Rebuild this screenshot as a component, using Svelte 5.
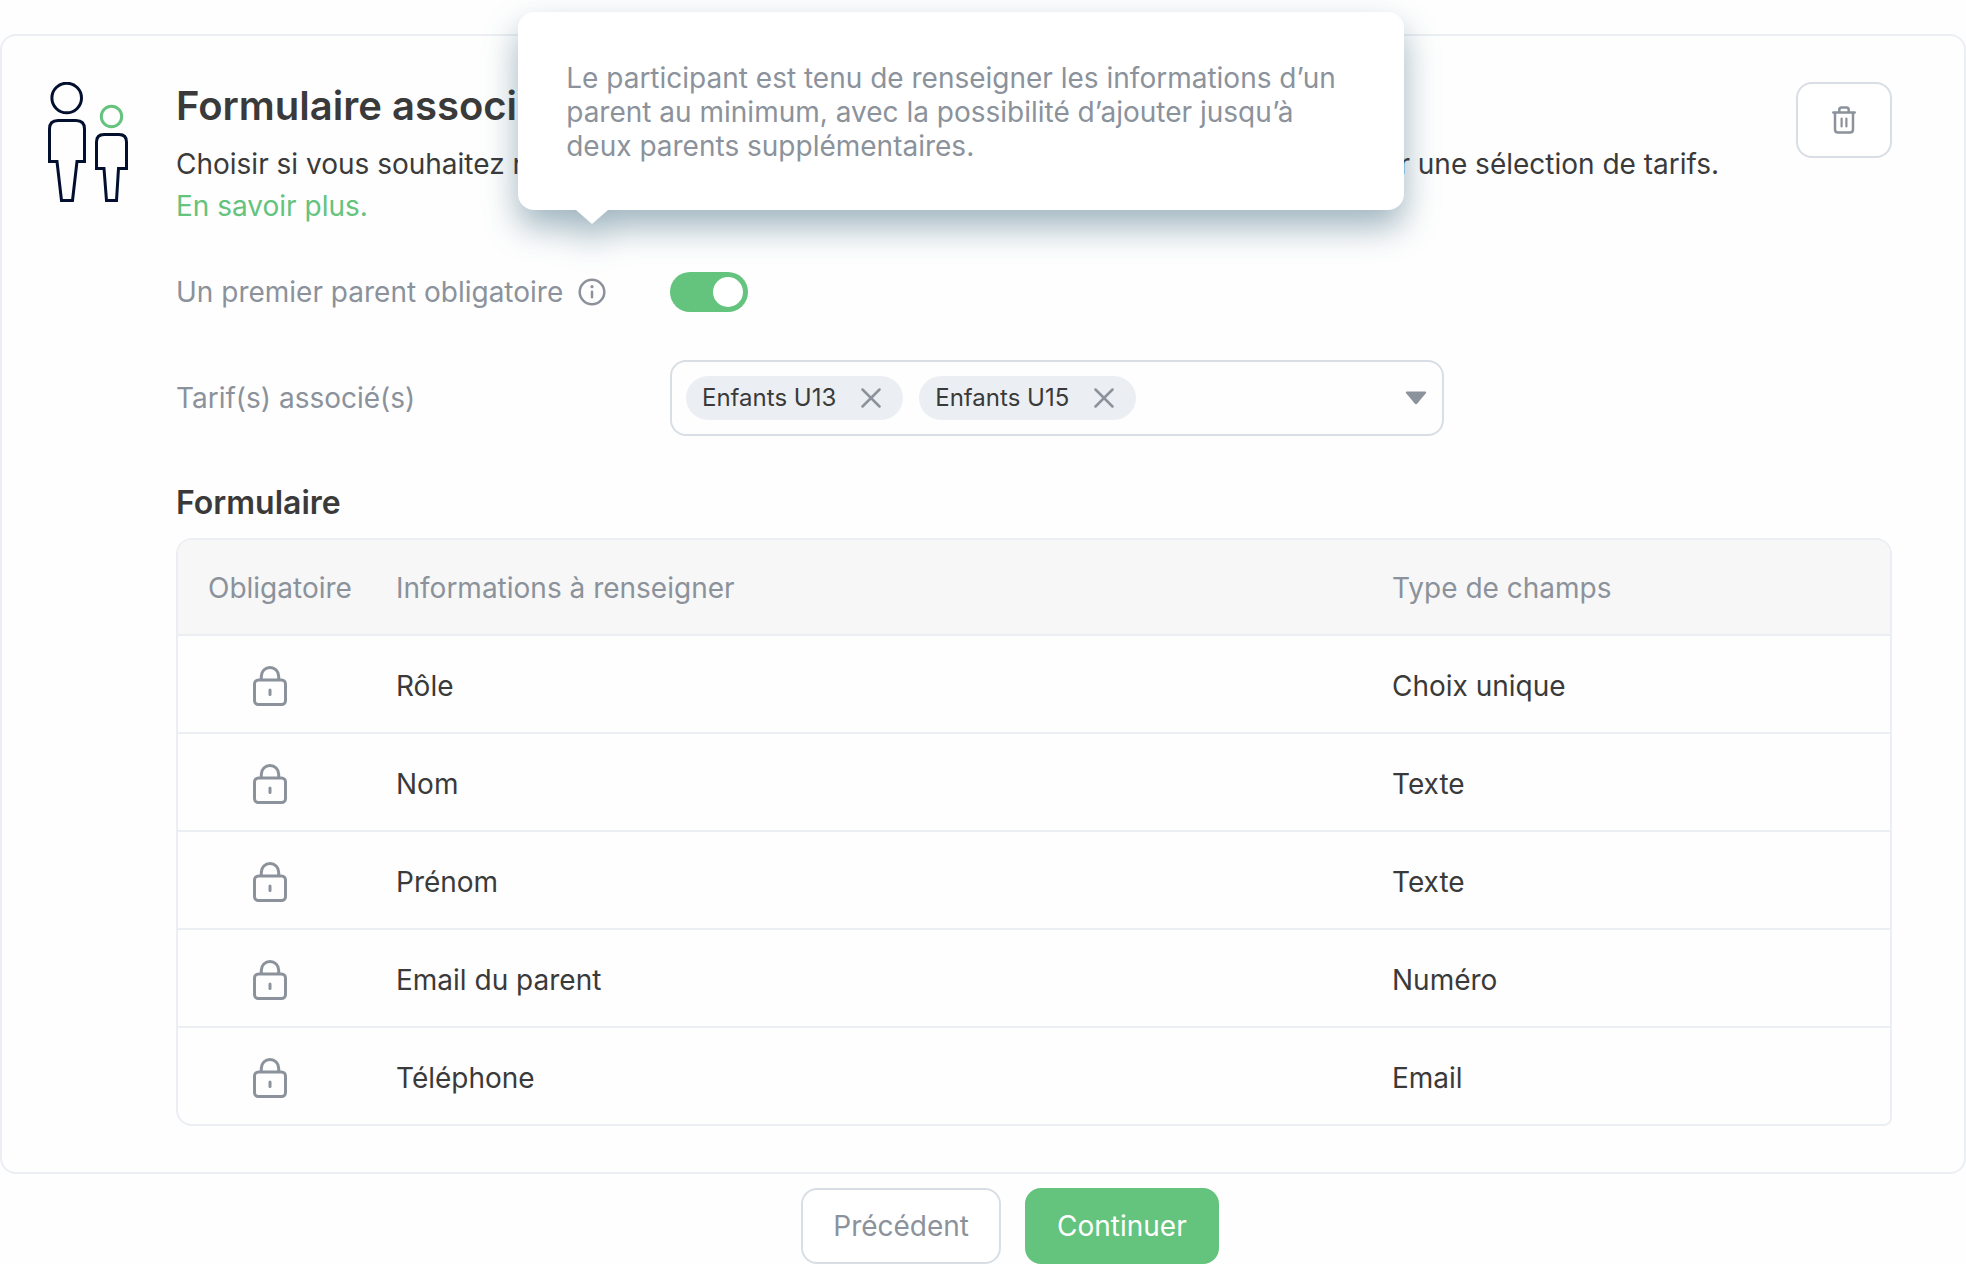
<script lang="ts">
interface Field {
  label: string;
  type: string;
}

const fields: Field[] = [
  { label: "Rôle", type: "Choix unique" },
  { label: "Nom", type: "Texte" },
  { label: "Prénom", type: "Texte" },
  { label: "Email du parent", type: "Numéro" },
  { label: "Téléphone", type: "Email" },
];

let rates = $state(["Enfants U13", "Enfants U15"]);
let parentRequired = $state(true);
let showTooltip = $state(true);

function removeRate(rate: string) {
  rates = rates.filter((r) => r !== rate);
}
</script>

<main class="page">
  <section class="card">
    <svg class="family" width="80" height="120" viewBox="0 0 80 120" fill="none" stroke="#030f2e" stroke-width="3">
      <circle cx="18.700" cy="16" r="14.8"/>
      <path d="M1.5 79.5V47Q1.5 38.500 10 38.500H28Q36.500 38.500 36.500 47V79.500H29L24.500 118.500H13.500L9 79.500Z"/>
      <circle cx="63.500" cy="34.500" r="10.200" stroke="#64c37d"/>
      <path d="M48.500 86.500V60Q48.500 52.500 56 52.500H71Q78.500 52.500 78.500 60V86.500H70.500L68.500 118.500H58.500L56 86.500Z"/>
    </svg>

    <div class="content">
      <header class="head">
        <div class="intro">
          <h1>Formulaire associé</h1>
          <p>Choisir si vous souhaitez rendre obligatoire le formulaire pour tous les tarifs ou seulement sur une sélection de tarifs.</p>
          <a href="#aide">En savoir plus.</a>
        </div>
        <button class="btn delete" aria-label="Supprimer">
          <svg width="24" height="28" viewBox="0 0 24 28" fill="none" stroke="currentColor" stroke-width="2.500" stroke-linecap="round" stroke-linejoin="round">
            <path d="M1.300 6.500H22.700M7.300 6V4Q7.300 1.500 9.500 1.500H14.500Q16.700 1.500 16.700 4V6M3 7V23.500Q3 26.500 6 26.500H18Q21 26.500 21 23.500V7"/>
            <path d="M9.600 12.500V20.500M14.400 12.500V20.500" stroke-width="2.200"/>
          </svg>
        </button>
      </header>

      <div class="row required">
        <div class="label">
          <label for="parent-required">Un premier parent obligatoire</label>
          <div class="info-anchor">
            <button class="info" aria-label="Information" onclick={() => showTooltip = !showTooltip}>
              <svg width="28" height="28" viewBox="0 0 28 28" fill="none" stroke="currentColor" stroke-width="2.500" stroke-linecap="round">
                <circle cx="14" cy="14" r="12.300"/>
                <path d="M14 13.800V19.200"/>
                <circle cx="14" cy="8.700" r="1.600" fill="currentColor" stroke="none"/>
              </svg>
            </button>
            {#if showTooltip}
              <div class="tooltip" role="tooltip">
                Le participant est tenu de renseigner les informations d’un parent au minimum, avec la possibilité d’ajouter jusqu’à deux parents supplémentaires.
              </div>
            {/if}
          </div>
        </div>
        <input id="parent-required" class="toggle" type="checkbox" role="switch" bind:checked={parentRequired}/>
      </div>

      <div class="row rates">
        <span class="label" id="rates-label">Tarif(s) associé(s)</span>
        <div class="multiselect" role="group" aria-labelledby="rates-label">
          {#each rates as rate (rate)}
            <span class="chip">
              {rate}
              <button aria-label="Retirer {rate}" onclick={() => removeRate(rate)}>
                <svg width="20" height="20" viewBox="0 0 20 20" fill="none" stroke="currentColor" stroke-width="2.500" stroke-linecap="round">
                  <path d="M1.500 1.500L18.500 18.500M18.500 1.500L1.500 18.500"/>
                </svg>
              </button>
            </span>
          {/each}
          <button class="caret" aria-label="Ouvrir la liste">
            <svg width="22" height="14" viewBox="0 0 22 14" fill="currentColor">
              <path d="M2 .5H20Q22 .8 20.800 2.300L12.300 12.600Q11 14 9.700 12.600L1.200 2.300Q0 .8 2 .5Z"/>
            </svg>
          </button>
        </div>
      </div>

      <h2>Formulaire</h2>
      <table>
        <thead>
          <tr>
            <th class="lock" scope="col">Obligatoire</th>
            <th scope="col">Informations à renseigner</th>
            <th class="type" scope="col">Type de champs</th>
          </tr>
        </thead>
        <tbody>
          {#each fields as field}
            <tr>
              <td class="lock">
                <svg width="34" height="40" viewBox="0 0 34 40" fill="none" stroke="currentColor" stroke-width="3" stroke-linecap="round">
                  <rect x="1.500" y="14" width="31" height="24.500" rx="4"/>
                  <path d="M8.300 13.500V10.200A8.700 8.700 0 0 1 25.700 10.200V13.500M17 24V28.500"/>
                </svg>
              </td>
              <td>{field.label}</td>
              <td>{field.type}</td>
            </tr>
          {/each}
        </tbody>
      </table>
    </div>
  </section>

  <footer class="actions">
    <button class="btn">Précédent</button>
    <button class="btn primary">Continuer</button>
  </footer>
</main>

<style>
:global(body) {
  background: #fefefe;
}

.page {
  padding-top: 34px;
  font-family: Inter, "Liberation Sans", sans-serif;
  font-size: 28px;
  line-height: 42px;
  color: #3a3a3a;
}

.page * {
  box-sizing: border-box;
}

button {
  padding: 0;
  border: none;
  background: none;
  font: inherit;
  color: #8b929b;
  cursor: pointer;
}

svg {
  display: block;
  flex-shrink: 0;
}

.card {
  display: flex;
  gap: 48px;
  padding: 46px 72px 46px 46px;
  border: 2px solid #ebeff3;
  border-radius: 16px;
}

.content {
  flex: 1;
  min-width: 0;
}

.head {
  display: flex;
  justify-content: space-between;
  align-items: flex-start;
  gap: 32px;
}

h1, h2, p {
  margin: 0;
}

h1 {
  margin-bottom: 13px;
  font-size: 40px;
  font-weight: 600;
  line-height: 48px;
}

a {
  color: #64c37d;
  text-decoration: none;
}

.btn {
  height: 76px;
  padding: 0 30px;
  border: 2px solid #d9dee5;
  border-radius: 16px;
  background: #fff;
}

.btn.delete {
  padding: 0 34px;
}

.btn.primary {
  border-color: #64c37d;
  background: #64c37d;
  color: #fff;
}

.row {
  display: flex;
  align-items: center;
  height: 42px;
}

.row.required {
  margin-top: 44px;
}

.row.rates {
  height: 76px;
  margin-top: 47px;
}

.label {
  display: flex;
  align-items: center;
  gap: 15px;
  width: 494px;
  color: #8b929b;
}

/* The tooltip hangs above the info button, its arrow on the icon */
.info-anchor {
  position: relative;
}

.info {
  display: block;
}

.tooltip {
  position: absolute;
  bottom: 96px;
  left: -60px;
  z-index: 10;
  width: 886px;
  padding: 49px 48px 47px;
  border-radius: 16px;
  background: #fff;
  filter: drop-shadow(0 17px 17px rgba(28, 78, 104, 0.42));
  line-height: 34px;
}

.tooltip::after {
  content: "";
  position: absolute;
  top: 100%;
  left: 58px;
  border: 16px solid transparent;
  border-top: 14px solid #fff;
  border-bottom: none;
}

.toggle {
  appearance: none;
  width: 78px;
  height: 40px;
  margin: 0;
  padding: 5px;
  border-radius: 20px;
  background: #c9cfd6;
  cursor: pointer;
}

.toggle::before {
  content: "";
  display: block;
  width: 30px;
  height: 30px;
  border-radius: 50%;
  background: #fff;
}

.toggle:checked {
  background: #64c37d;
}

.toggle:checked::before {
  margin-left: auto;
}

.multiselect {
  display: flex;
  align-items: center;
  gap: 16px;
  width: 774px;
  height: 76px;
  padding: 0 15px 0 14px;
  border: 2px solid #d9dee5;
  border-radius: 16px;
}

.chip {
  display: flex;
  align-items: center;
  gap: 25px;
  height: 44px;
  padding: 0 22px 0 16px;
  border-radius: 22px;
  background: #ebeff3;
  font-size: 24px;
}

.caret {
  margin-left: auto;
}

h2 {
  margin: 47px 0 15px;
  font-size: 32px;
  font-weight: 600;
  line-height: 40px;
}

table {
  width: 100%;
  table-layout: fixed;
  border: 2px solid #ebeff3;
  border-radius: 16px 16px 8px 16px;
  border-spacing: 0;
  overflow: hidden;
}

th, td {
  padding: 0;
  text-align: left;
  font-weight: 400;
}

th {
  height: 94px;
  padding-top: 2px;
  background: #f7f7f7;
  color: #8b929b;
}

td {
  height: 98px;
  padding-top: 4px;
  border-top: 2px solid #ebeff3;
}

.lock {
  width: 218px;
  padding-left: 30px;
  color: #8b929b;
}

td.lock {
  padding-left: 75px;
}

th.type {
  width: 498px;
}

.actions {
  display: flex;
  justify-content: center;
  gap: 24px;
  margin-top: 14px;
  padding-left: 54px;
}
</style>
